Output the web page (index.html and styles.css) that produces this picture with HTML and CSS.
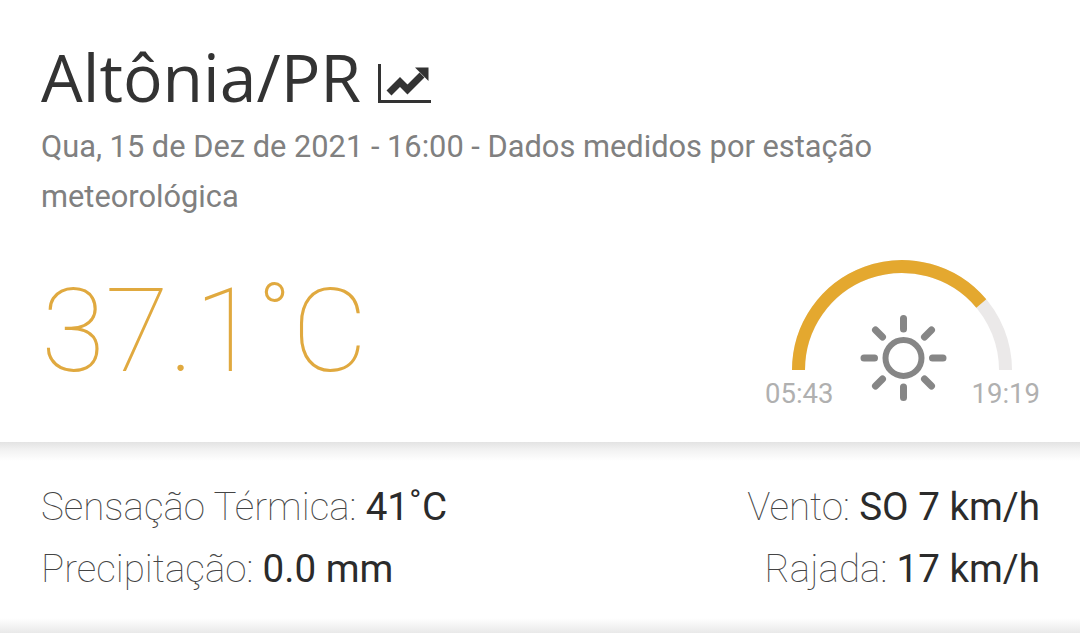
FILE: index.html
```html
<!DOCTYPE html>
<html lang="pt-BR">
<head>
    <meta charset="UTF-8">
    <meta name="viewport" content="width=device-width, initial-scale=1.0">
    <title>Altônia/PR</title>
    <link rel="stylesheet" href="styles.css">
</head>
<body>
    <section class="current">
        <h1 class="city">Altônia/PR
            <svg class="chart-icon" width="54" height="42" viewBox="0 0 54 42">
                <path d="M1.500 1V38.500H53" fill="none" stroke="#333" stroke-width="3"/>
                <path d="M11 30L22 19L29.500 26.500L44 12" fill="none" stroke="#333" stroke-width="7"/>
                <path d="M37 4.500H50.500V18Z" fill="#333"/>
            </svg>
        </h1>
        <p class="measured">Qua, 15 de Dez de 2021 - 16:00 - Dados medidos por estação meteorológica</p>

        <div class="now">
            <div class="temp">37.1˚C</div>
            <div class="gauge">
                <svg class="arc" width="220" height="110" viewBox="0 0 220 110">
                    <path d="M6.500 110A103.500 103.500 0 0 1 213.500 110" fill="none" stroke="#ebe9e9" stroke-width="13"/>
                    <path d="M6.500 110A103.500 103.500 0 0 1 189.300 43.500" fill="none" stroke="#e4a82f" stroke-width="13"/>
                    <g fill="none" stroke="#868686" stroke-width="6" stroke-linecap="round" transform="translate(111.500 98)">
                        <circle r="18"/>
                        <path d="M0-39.500V-29M0 39.500V29M-39.500 0H-29M39.500 0H29M-28-28L-21-21M28-28L21-21M-28 28L-21 21M28 28L21 21" stroke-width="7"/>
                    </g>
                </svg>
                <div class="times">
                    <span>05:43</span>
                    <span>19:19</span>
                </div>
            </div>
        </div>
    </section>

    <section class="details">
        <div class="col">
            <p class="item">Sensação Térmica: <b>41˚C</b></p>
            <p class="item">Precipitação: <b>0.0 mm</b></p>
        </div>
        <div class="col col-right">
            <p class="item">Vento: <b>SO 7 km/h</b></p>
            <p class="item">Rajada: <b>17 km/h</b></p>
        </div>
    </section>
</body>
</html>
```

FILE: styles.css
```css
html, body {
    margin: 0;
    height: 633px;
    overflow: hidden;
}
body {
    font-family: Roboto, sans-serif;
    background: #fff;
    background-image: linear-gradient(to top, #e9e9e9, #fff 15px);
}
.current {
    height: 442px;
    padding: 0 41px;
    box-sizing: border-box;
    background: #fff;
}
.city {
    margin: 0;
    padding-top: 36px;
    font-family: "Open Sans", sans-serif;
    font-size: 66px;
    line-height: 80px;
    font-weight: 400;
    color: #333;
}
.chart-icon {
    vertical-align: -3px;
}
.measured {
    margin: 6px 0 0;
    font-size: 30.800px;
    line-height: 50px;
    color: #808080;
    max-width: 900px;
}
.now {
    display: flex;
    justify-content: space-between;
    align-items: flex-start;
    margin-top: 18px;
}
.temp {
    font-size: 117px;
    line-height: 150px;
    font-weight: 100;
    color: #e0a93f;
    margin-top: 16px;
}
.gauge {
    width: 275px;
    margin-top: 20px;
    margin-right: -1px;
}
.arc {
    display: block;
    margin-left: 27px;
    overflow: visible;
}
.times {
    display: flex;
    justify-content: space-between;
    font-size: 27.500px;
    line-height: 32px;
    color: #b0b0b0;
    margin-top: 8px;
}
.details {
    display: flex;
    justify-content: space-between;
    padding: 34px 40px 0 41px;
    background-image: linear-gradient(#e3e3e3, #f2f2f2 8px, #fff 19px);
    background-repeat: no-repeat;
    background-size: 100% 19px;
}
.item {
    margin: 0;
    font-size: 38.600px;
    line-height: 62px;
    font-weight: 100;
    color: #444;
}
.item b {
    font-weight: 400;
    color: #2b2b2b;
}
.col-right {
    text-align: right;
}
```
